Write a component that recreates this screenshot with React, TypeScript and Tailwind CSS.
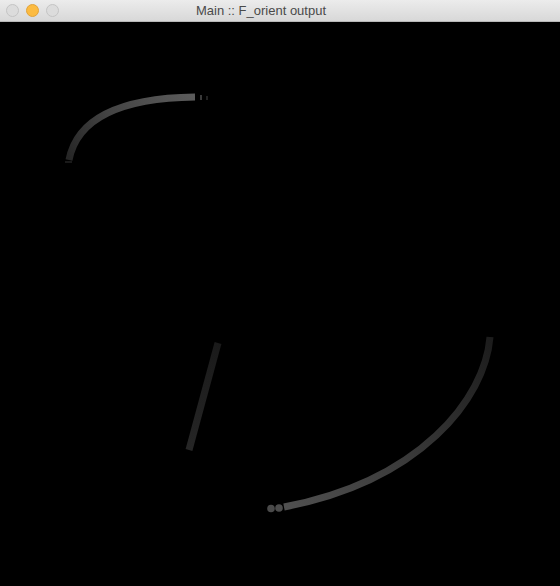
const Light = ({ color, border }: { color: string; border: string }) => (
  <span className={`h-[13px] w-[13px] rounded-full border ${color} ${border}`} />
);

const App = () => {
  return (
    <div className="flex h-[586px] w-[560px] flex-col overflow-hidden bg-black font-['Liberation_Sans',Arial,sans-serif]">
      {/* title bar */}
      <div className="relative flex h-[22px] shrink-0 items-center border-b border-[#b8b8b8] bg-gradient-to-b from-[#ececec] to-[#d8d8d8] pl-[6px]">
        <div className="flex items-center gap-[7px]">
          <Light color="bg-[#dcdcdc]" border="border-[#c4c4c4]" />
          <Light color="bg-[#fcbb41]" border="border-[#e1a33a]" />
          <Light color="bg-[#dcdcdc]" border="border-[#c4c4c4]" />
        </div>
        <div className="absolute inset-x-0 pr-[38px] text-center text-[13px] leading-[22px] text-[#4a4a4a]">
          Main :: F_orient output
        </div>
      </div>

      {/* canvas */}
      <div className="flex-1 bg-black">
        <svg width="560" height="563" viewBox="0 23 560 563">
          <defs>
            <linearGradient id="g1" gradientUnits="userSpaceOnUse" x1="69" y1="161" x2="195" y2="98">
              <stop offset="0" stopColor="#262626" />
              <stop offset="0.4" stopColor="#444444" />
              <stop offset="1" stopColor="#5c5c5c" />
            </linearGradient>
            <linearGradient id="g2" gradientUnits="userSpaceOnUse" x1="218" y1="344" x2="189" y2="451">
              <stop offset="0" stopColor="#1a1a1a" />
              <stop offset="1" stopColor="#262626" />
            </linearGradient>
            <linearGradient id="g3" gradientUnits="userSpaceOnUse" x1="490" y1="338" x2="285" y2="508">
              <stop offset="0" stopColor="#1c1c1c" />
              <stop offset="0.5" stopColor="#383838" />
              <stop offset="1" stopColor="#505050" />
            </linearGradient>
          </defs>

          <path d="M69 161 C 77 120, 120 99, 195 98" fill="none" stroke="url(#g1)" strokeWidth="7" />
          <rect x="200" y="96" width="2" height="5" fill="#3a3a3a" />
          <rect x="206" y="97" width="2" height="4" fill="#222" />
          <rect x="65" y="162" width="7" height="2" fill="#1a1a1a" />

          <path d="M218 344 Q 204 395 189 451" fill="none" stroke="url(#g2)" strokeWidth="7" />

          <path d="M490 338 C 485 400, 420 482, 284 508" fill="none" stroke="url(#g3)" strokeWidth="7" />
          <circle cx="271" cy="509.5" r="3.8" fill="#4a4a4a" />
          <circle cx="279" cy="509" r="3.8" fill="#4c4c4c" />
        </svg>
      </div>
    </div>
  );
};

export default App;
